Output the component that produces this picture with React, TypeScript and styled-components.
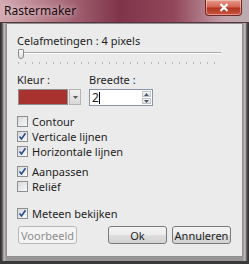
import { FC } from 'react'
import styled, { createGlobalStyle } from 'styled-components'

const Global = createGlobalStyle`
  html, body { margin: 0; padding: 0; background: #ffffff; }
  body { font-family: "Noto Sans", "Open Sans", sans-serif; font-size: 11px; color: #1e1e1e; }
`

const Window = styled.div`
  width: 249px;
  height: 264px;
  box-sizing: border-box;
  display: flex;
  flex-direction: column;
  background: linear-gradient(90deg, #2f2b2c 0px, #4e4849 2px, #c2bebf 4px, #9a9697 6px, #9a9697 243px, #c2bebf 245px, #4e4849 247px, #2f2b2c 249px);
  border-bottom: 3px solid #3b3a3b;
`

const TitleBar = styled.div`
  height: 22px;
  flex: none;
  display: flex;
  align-items: flex-start;
  justify-content: space-between;
  padding: 0 7px 0 4px;
  background: linear-gradient(90deg, #d3aab1 0%, #b07482 22%, #80344a 48%, #93475b 70%, #c4a0a7 90%, #b9acae 100%);
  border-bottom: 1px solid #55363e;
`

const Title = styled.span`
  font-size: 12px;
  line-height: 12px;
  margin-top: 5px;
  color: #1a0a0e;
  text-shadow: 0 0 6px rgba(255, 255, 255, 0.8);
`

const CloseButton = styled.div`
  width: 37px;
  height: 16px;
  box-sizing: border-box;
  border: 1px solid #6e2a2a;
  border-top: none;
  border-radius: 0 0 4px 4px;
  background: linear-gradient(180deg, #e59b8c 0%, #d46654 45%, #b23522 55%, #c9553f 100%);
  box-shadow: inset 0 0 0 1px rgba(255, 220, 210, 0.5);
  display: flex;
  align-items: center;
  justify-content: center;
`

const Frame = styled.div`
  flex: 1;
  display: flex;
  padding: 0 6px 4px 6px;
`

const Panel = styled.div`
  flex: 1;
  display: flex;
  flex-direction: column;
  background: #ebebeb;
  border: 1px solid #8f8f8f;
  padding: 10px 10px 0 10px;
`

const Caption = styled.div`
  line-height: 14px;
  height: 14px;
`

const SliderArea = styled.div`
  margin-top: 1px;
  position: relative;
  height: 20px;
  padding: 0 11px 0 1px;
`

const Track = styled.div`
  margin-top: 3px;
  height: 0;
  border-top: 1px solid #a9a9a9;
  border-bottom: 1px solid #ffffff;
`

const Thumb = styled.div`
  position: absolute;
  left: 1px;
  top: 0;
  width: 4px;
  height: 8px;
  border: 1px solid #8a8a8a;
  border-radius: 1px 1px 3px 3px;
  background: linear-gradient(180deg, #fafafa, #dedede);
`

const Ticks = styled.div`
  margin-top: 8px;
  height: 2px;
  background: repeating-linear-gradient(90deg, #b7b7b7 0 1px, transparent 1px 7px);
`

const FieldRow = styled.div`
  display: flex;
  gap: 8px;
  margin-top: 4px;
`

const Field = styled.div<{ $w: number }>`
  width: ${p => p.$w}px;
  display: flex;
  flex-direction: column;
`

const Label = styled.div`
  line-height: 14px;
  height: 14px;
  margin-bottom: 2px;
`

const Combo = styled.div`
  display: flex;
  height: 16px;
  align-items: stretch;
  margin-left: 1px;
`

const Swatch = styled.div<{ $color: string }>`
  width: 51px;
  background: ${p => p.$color};
  border: 1px solid #8c8c8c;
`

const DropButton = styled.div`
  width: 10px;
  margin-left: 1px;
  border: 1px solid #b4b4b4;
  background: linear-gradient(180deg, #f2f2f2, #d8d8d8);
  display: flex;
  align-items: center;
  justify-content: center;
`

const Spin = styled.div`
  display: flex;
  height: 17px;
  box-sizing: border-box;
  border: 1px solid #8a96a8;
  background: #ffffff;
  width: 64px;
`

const SpinInput = styled.div`
  flex: 1;
  padding-left: 2px;
  line-height: 15px;
  font-size: 12px;
`

const Caret = styled.span`
  display: inline-block;
  width: 1px;
  height: 12px;
  background: #000;
  vertical-align: -2px;
`

const SpinButtons = styled.div`
  width: 9px;
  display: flex;
  flex-direction: column;
  gap: 1px;
  margin: 1px;
`

const SpinBtn = styled.div`
  flex: 1;
  border: 1px solid #c0c4ca;
  background: linear-gradient(180deg, #f7f7f7, #e1e1e1);
  display: flex;
  align-items: center;
  justify-content: center;
`

const Checks = styled.div<{ $top: number }>`
  display: flex;
  flex-direction: column;
  gap: 4px;
  margin-top: ${p => p.$top}px;
`

const CheckRow = styled.label`
  display: flex;
  align-items: center;
  gap: 4px;
  height: 11px;
  line-height: 11px;
`

const Box = styled.span`
  width: 11px;
  height: 11px;
  box-sizing: border-box;
  border: 1px solid #8e8f8f;
  background: linear-gradient(135deg, #d6d9de, #f8f8f8);
  display: flex;
  align-items: center;
  justify-content: center;
`

const Buttons = styled.div`
  display: flex;
  margin-top: 7px;
  padding-left: 1px;
`

const Button = styled.div<{ $disabled?: boolean; $ml: number }>`
  width: 59px;
  height: 18px;
  box-sizing: border-box;
  margin-left: ${p => p.$ml}px;
  border: 1px solid ${p => (p.$disabled ? '#b5b9bc' : '#7a7a7a')};
  border-radius: 3px;
  background: ${p =>
    p.$disabled ? '#f4f4f4' : 'linear-gradient(180deg, #f4f4f4 0%, #ececec 50%, #dedede 51%, #d2d2d2 100%)'};
  color: ${p => (p.$disabled ? '#8d8d8d' : '#1e1e1e')};
  display: flex;
  align-items: center;
  justify-content: center;
`

const Check: FC<{ checked?: boolean; label: string }> = ({ checked, label }) => (
  <CheckRow>
    <Box>
      {checked && (
        <svg width="9" height="9" viewBox="0 0 9 9">
          <path d="M1.5 4.5 L3.5 7 L7.5 1.2" fill="none" stroke="#2a4d8f" strokeWidth="1.6" />
        </svg>
      )}
    </Box>
    <span>{label}</span>
  </CheckRow>
)

const App: FC = () => {
  return (
    <>
      <Global />
      <Window>
        <TitleBar>
          <Title>Rastermaker</Title>
          <CloseButton>
            <svg width="10" height="9" viewBox="0 0 10 9">
              <path d="M1.5 1 L8.5 8 M8.5 1 L1.5 8" stroke="#ffffff" strokeWidth="2.2" />
            </svg>
          </CloseButton>
        </TitleBar>
        <Frame>
          <Panel>
            <Caption>Celafmetingen : 4 pixels</Caption>
            <SliderArea>
              <Track />
              <Thumb />
              <Ticks />
            </SliderArea>
            <FieldRow>
              <Field $w={64}>
                <Label>Kleur :</Label>
                <Combo>
                  <Swatch $color="#a8332e" />
                  <DropButton>
                    <svg width="5" height="3" viewBox="0 0 5 3">
                      <path d="M0 0 L5 0 L2.5 3 Z" fill="#5a5a5a" />
                    </svg>
                  </DropButton>
                </Combo>
              </Field>
              <Field $w={70}>
                <Label>Breedte :</Label>
                <Spin>
                  <SpinInput>
                    2<Caret />
                  </SpinInput>
                  <SpinButtons>
                    <SpinBtn>
                      <svg width="5" height="3" viewBox="0 0 5 3">
                        <path d="M0 3 L5 3 L2.5 0 Z" fill="#4a5a70" />
                      </svg>
                    </SpinBtn>
                    <SpinBtn>
                      <svg width="5" height="3" viewBox="0 0 5 3">
                        <path d="M0 0 L5 0 L2.5 3 Z" fill="#4a5a70" />
                      </svg>
                    </SpinBtn>
                  </SpinButtons>
                </Spin>
              </Field>
            </FieldRow>
            <Checks $top={10}>
              <Check label="Contour" />
              <Check checked label="Verticale lijnen" />
              <Check checked label="Horizontale lijnen" />
            </Checks>
            <Checks $top={9}>
              <Check checked label="Aanpassen" />
              <Check label="Reliëf" />
            </Checks>
            <Checks $top={16}>
              <Check checked label="Meteen bekijken" />
            </Checks>
            <Buttons>
              <Button $disabled $ml={0}>Voorbeeld</Button>
              <Button $ml={31}>Ok</Button>
              <Button $ml={5}>Annuleren</Button>
            </Buttons>
          </Panel>
        </Frame>
      </Window>
    </>
  )
}

export default App
